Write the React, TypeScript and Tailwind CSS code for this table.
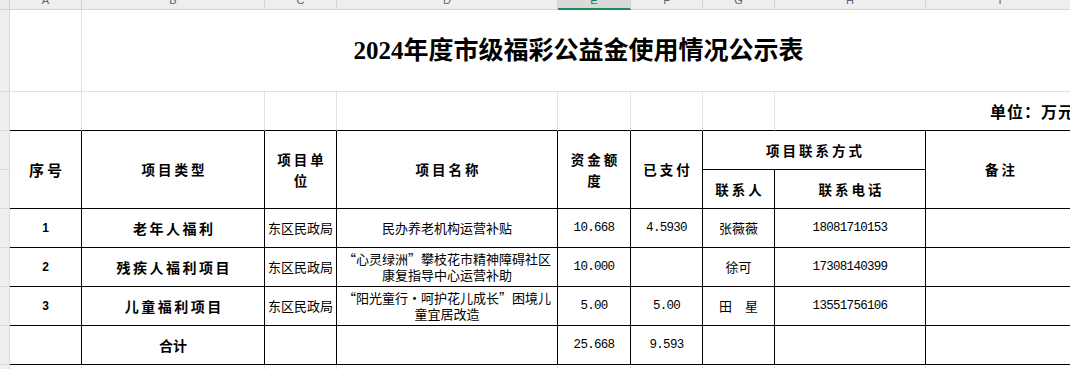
import React from "react";

const CJK = "font-['Noto_Sans_CJK_SC',sans-serif]";
const MONO = "font-['Liberation_Mono','Noto_Sans_CJK_SC',monospace]";

const COLS = ["A", "B", "C", "D", "E", "F", "G", "H", "I"];

// light spreadsheet gridline / table rule
const grid = "border-r border-b border-[#e1e1e1]";
const cell = "border-r border-b border-black flex items-center justify-center text-center";
const head = `${cell} ${CJK} text-[13.5px] font-bold tracking-[3px] pl-[3px] leading-[21px]`;
const label = `${cell} ${CJK} text-[14px] font-bold tracking-[2.5px] pl-[2.5px]`;
const plain = `${cell} ${CJK} text-[13px]`;
const num = `${cell} ${MONO} text-[12.5px] tracking-[-0.7px]`;

// full-width CJK quotes, as the sheet's font draws them
const Lq = () => <span className="inline-block w-[13px] text-right">“</span>;
const Rq = () => <span className="inline-block w-[13px] text-left">”</span>;

function Gutter() {
  return <div className="bg-[#eeeeee] border-r border-b border-[#dadada]" />;
}

const ROWS: {
  no: string;
  type: string;
  unit: string;
  name: React.ReactNode[];
  amount: string;
  paid: string;
  person: string;
  phone: string;
}[] = [
  {
    no: "1",
    type: "老年人福利",
    unit: "东区民政局",
    name: ["民办养老机构运营补贴"],
    amount: "10.668",
    paid: "4.5930",
    person: "张薇薇",
    phone: "18081710153",
  },
  {
    no: "2",
    type: "残疾人福利项目",
    unit: "东区民政局",
    name: [
      <>
        <Lq />
        心灵绿洲
        <Rq />
        攀枝花市精神障碍社区
      </>,
      "康复指导中心运营补助",
    ],
    amount: "10.000",
    paid: "",
    person: "徐可",
    phone: "17308140399",
  },
  {
    no: "3",
    type: "儿童福利项目",
    unit: "东区民政局",
    name: [
      <>
        <Lq />
        阳光童行・呵护花儿成长
        <Rq />
        困境儿
      </>,
      "童宜居改造",
    ],
    amount: "5.00",
    paid: "5.00",
    person: "田　星",
    phone: "13551756106",
  },
];

export default function App() {
  return (
    <div className="w-[1070px] h-[369px] overflow-hidden bg-white text-black">
      <div className="grid w-[1075px] grid-cols-[10px_72px_183px_72px_221px_73px_72px_72px_151px_149px] grid-rows-[10px_82px_39px_39px_39px_39px_39px_39px_39px_20px]">
        {/* column letters */}
        <div className="bg-[#ececec] border-r border-b border-[#d4d4d4]" />
        {COLS.map((c) =>
          c === "E" ? (
            <div
              key={c}
              className="bg-[#dadada] border-b-2 border-b-[#1e8b57] border-r border-r-[#d4d4d4] overflow-hidden text-center font-['Liberation_Sans',sans-serif] text-[11px] leading-[11px] text-[#1e7a4c]"
            >
              <div className="-mt-[5px]">{c}</div>
            </div>
          ) : (
            <div
              key={c}
              className="bg-[#eeeeee] border-r border-b border-[#d4d4d4] overflow-hidden text-center font-['Liberation_Sans',sans-serif] text-[11px] leading-[11px] text-[#5b6478]"
            >
              <div className="-mt-[5px]">{c}</div>
            </div>
          )
        )}

        {/* title row */}
        <Gutter />
        <div className={grid} />
        <div className="col-span-8 border-b border-[#e1e1e1] flex items-center justify-center font-['Liberation_Serif','Noto_Sans_CJK_SC',serif] text-[25px] font-bold">
          2024年度市级福彩公益金使用情况公示表
        </div>

        {/* unit row */}
        <Gutter />
        {[0, 1, 2, 3, 4, 5, 6].map((i) => (
          <div key={i} className="border-r border-r-[#e1e1e1] border-b border-b-black" />
        ))}
        <div className={`col-span-2 border-b border-black flex items-center justify-end ${CJK} text-[16px] font-bold tracking-[1px]`}>
          单位：万元
        </div>

        {/* header */}
        <Gutter />
        <div className={`${head} row-span-2 text-[15px] tracking-[2px] pl-[2px]`}>序号</div>
        <div className={`${head} row-span-2`}>项目类型</div>
        <div className={`${head} row-span-2`}>
          项目单
          <br />位
        </div>
        <div className={`${head} row-span-2`}>项目名称</div>
        <div className={`${head} row-span-2`}>
          资金额
          <br />度
        </div>
        <div className={`${head} row-span-2`}>已支付</div>
        <div className={`${head} col-span-2`}>项目联系方式</div>
        <div className={`${head} row-span-2`}>备注</div>
        <Gutter />
        <div className={head}>联系人</div>
        <div className={head}>联系电话</div>

        {/* data rows */}
        {ROWS.map((r) => (
          <React.Fragment key={r.no}>
            <Gutter />
            <div className={`${cell} font-['Liberation_Sans',sans-serif] text-[12px] font-bold`}>{r.no}</div>
            <div className={label}>{r.type}</div>
            <div className={plain}>{r.unit}</div>
            <div className={`${plain} flex-col leading-[16px] whitespace-nowrap`}>
              {r.name.map((line, i) => (
                <div key={i}>{line}</div>
              ))}
            </div>
            <div className={num}>{r.amount}</div>
            <div className={num}>{r.paid}</div>
            <div className={plain}>{r.person}</div>
            <div className={num}>{r.phone}</div>
            <div className={cell} />
          </React.Fragment>
        ))}

        {/* total */}
        <Gutter />
        <div className={cell} />
        <div className={`${cell} ${CJK} text-[14px] font-bold`}>合计</div>
        <div className={cell} />
        <div className={cell} />
        <div className={num}>25.668</div>
        <div className={num}>9.593</div>
        <div className={cell} />
        <div className={cell} />
        <div className={cell} />

        {/* next (empty) row */}
        <Gutter />
        {COLS.map((c) => (
          <div key={c} className="border-r border-[#e1e1e1]" />
        ))}
      </div>
    </div>
  );
}
